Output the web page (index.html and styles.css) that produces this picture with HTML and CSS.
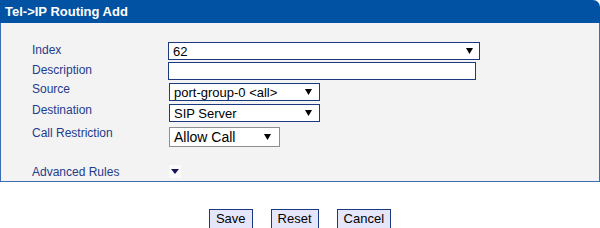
FILE: index.html
```html
<!DOCTYPE html>
<html>
<head>
<meta charset="utf-8">
<link rel="stylesheet" href="styles.css">
</head>
<body>
<div class="panel">
  <div class="panel-head">Tel-&gt;IP Routing Add</div>
  <div class="panel-body">
    <div class="form">
      <div class="label">Index</div>
      <div class="ctl"><div class="select sel-index"><span class="val">62</span><svg class="arr" width="7" height="6" viewBox="0 0 7 6"><polygon points="0,0 7,0 3.5,6" fill="#000"/></svg></div></div>
      <div class="label">Description</div>
      <div class="ctl"><div class="input"></div></div>
      <div class="label lift">Source</div>
      <div class="ctl"><div class="select sel-mid"><span class="val">port-group-0 &lt;all&gt;</span><svg class="arr" width="7" height="6" viewBox="0 0 7 6"><polygon points="0,0 7,0 3.5,6" fill="#000"/></svg></div></div>
      <div class="label lift">Destination</div>
      <div class="ctl"><div class="select sel-mid"><span class="val">SIP Server</span><svg class="arr" width="7" height="6" viewBox="0 0 7 6"><polygon points="0,0 7,0 3.5,6" fill="#000"/></svg></div></div>
      <div class="label lift">Call Restriction</div>
      <div class="ctl"><div class="select sel-call"><span class="val">Allow Call</span><svg class="arr" width="7" height="6" viewBox="0 0 7 6"><polygon points="0,0 7,0 3.5,6" fill="#000"/></svg></div></div>
    </div>
    <div class="adv">
      <div class="label">Advanced Rules</div>
      <div class="adv-toggle"><svg width="8" height="5" viewBox="0 0 8 5"><polygon points="0,0 8,0 4,5" fill="#16165c"/></svg></div>
    </div>
  </div>
</div>
<div class="buttons">
  <button class="btn">Save</button>
  <button class="btn">Reset</button>
  <button class="btn">Cancel</button>
</div>
</body>
</html>
```
FILE: styles.css
```css
html, body {
  margin: 0;
  padding: 0;
  background: #ffffff;
  font-family: "Liberation Sans", Arial, sans-serif;
}
.panel {
  width: 600px;
  box-sizing: border-box;
}
.panel-head {
  height: 23px;
  background: #0152a2;
  color: #ffffff;
  font-weight: bold;
  font-size: 13px;
  line-height: 23px;
  padding-left: 5px;
  border-top-right-radius: 7px;
}
.panel-body {
  background: #f3f3f3;
  border: 1px solid #3a6cb4;
  border-top: none;
  padding: 19px 0 3px 31px;
  height: 159px;
  box-sizing: border-box;
}
.form {
  display: grid;
  grid-template-columns: 136px 1fr;
  grid-template-rows: 20px 21px 21px 23px 20px;
  align-items: start;
}
.label {
  font-size: 12px;
  line-height: 16px;
  color: #253b8c;
}
.label.lift {
  margin-top: -2px;
}
.ctl {
  display: flex;
}
.select {
  box-sizing: border-box;
  height: 18px;
  background: #ffffff;
  border: 1px solid #1c3a80;
  display: flex;
  align-items: center;
  justify-content: space-between;
  padding: 0 6px 0 4px;
  font-size: 13px;
  color: #000;
}
.sel-index { width: 312px; }
.sel-mid { width: 151px; margin-left: 1px; padding-right: 7px; }
.sel-call {
  width: 111px;
  height: 20px;
  margin-left: 1px;
  border-color: #8f8f8f;
  padding-right: 8px;
  font-size: 14px;
}
.input {
  box-sizing: border-box;
  width: 308px;
  height: 18px;
  background: #ffffff;
  border: 1px solid #1c3a80;
}
.adv {
  display: flex;
  margin-top: 17px;
  height: 14px;
}
.adv .label {
  width: 136px;
}
.adv-toggle {
  width: 12px;
  height: 13px;
  margin-top: 1px;
  background: #fbfbfb;
  display: flex;
  align-items: center;
  justify-content: center;
  margin-left: 1px;
}
.buttons {
  display: flex;
  justify-content: center;
  gap: 18px;
  margin-top: 27px;
}
.btn {
  box-sizing: border-box;
  height: 20px;
  padding: 0 6px;
  background: #e6e6fa;
  border: 1px solid #1c3a80;
  border-radius: 0;
  font-family: "Liberation Sans", Arial, sans-serif;
  font-size: 13px;
  color: #000;
  line-height: 18px;
}
```
